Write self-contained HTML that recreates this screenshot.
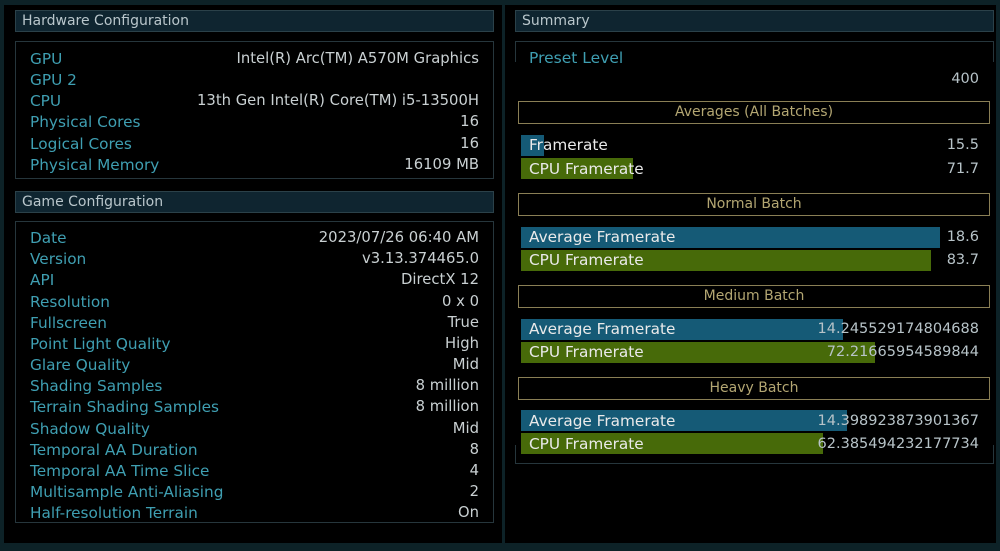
<!DOCTYPE html><html><head><meta charset="utf-8"><style>
*{margin:0;padding:0;box-sizing:border-box}
body{width:1000px;height:551px;background:#0d2227;position:relative;overflow:hidden;font-family:"DejaVu Sans","Liberation Sans",sans-serif;font-size:14.5px}
.a{position:absolute}
.blk{background:#000}
.hdr{position:absolute;background:#0f2530;border:1px solid #2b4149;color:#b9c6cb;padding-left:6px;line-height:21px;font-size:14px}
.box{position:absolute;border:1px solid #26363c}
.w{position:absolute;left:0;width:1000px;height:10px}
.l{position:absolute;left:30px;color:#3f9fb2;white-space:nowrap;font-size:15.3px}
.v{position:absolute;right:521px;color:#c9d0d2;white-space:nowrap;text-align:right;font-size:14.8px}
.gold{position:absolute;left:518px;width:472px;height:23px;border:1px solid #8a7f55;color:#b3a672;text-align:center;line-height:21px;font-size:14px}
.bar{position:absolute;left:521px;height:21px}
.bl{background:#155a76}.gr{background:#476a09}
.bt{position:absolute;left:529px;color:#eaeaea;white-space:nowrap;font-size:15.3px}
.bv{position:absolute;right:21px;color:#b7c3c8;white-space:nowrap}
</style></head><body>
<div class="a blk" style="left:4px;top:0;width:498px;height:543px"></div>
<div class="a blk" style="left:505px;top:0;width:491px;height:543px"></div>
<div class="a" style="left:0;top:0;width:1000px;height:5px;background:#0d2227"></div>

<div class="hdr" style="left:15px;top:10px;width:479px;height:22px">Hardware Configuration</div>
<div class="box" style="left:15px;top:41px;width:479px;height:138px"></div>
<div class="hdr" style="left:15px;top:191px;width:479px;height:22px">Game Configuration</div>
<div class="box" style="left:15px;top:221px;width:479px;height:302px"></div>

<div class="w" style="top:1px">
<div class="l" style="top:49px">GPU</div><div class="v" style="top:49px">Intel(R) Arc(TM) A570M Graphics</div>
<div class="l" style="top:70px">GPU 2</div>
<div class="l" style="top:91px">CPU</div><div class="v" style="top:91px">13th Gen Intel(R) Core(TM) i5-13500H</div>
<div class="l" style="top:112px">Physical Cores</div><div class="v" style="top:112px">16</div>
<div class="l" style="top:134px">Logical Cores</div><div class="v" style="top:134px">16</div>
<div class="l" style="top:155px">Physical Memory</div><div class="v" style="top:155px">16109 MB</div>
</div>
<div class="w" style="top:229px">
<div class="l" style="top:0px">Date</div><div class="v" style="top:0px">2023/07/26 06:40 AM</div>
<div class="l" style="top:21px">Version</div><div class="v" style="top:21px">v3.13.374465.0</div>
<div class="l" style="top:42px">API</div><div class="v" style="top:42px">DirectX 12</div>
<div class="l" style="top:64px">Resolution</div><div class="v" style="top:64px">0 x 0</div>
<div class="l" style="top:85px">Fullscreen</div><div class="v" style="top:85px">True</div>
<div class="l" style="top:106px">Point Light Quality</div><div class="v" style="top:106px">High</div>
<div class="l" style="top:127px">Glare Quality</div><div class="v" style="top:127px">Mid</div>
<div class="l" style="top:148px">Shading Samples</div><div class="v" style="top:148px">8 million</div>
<div class="l" style="top:169px">Terrain Shading Samples</div><div class="v" style="top:169px">8 million</div>
<div class="l" style="top:191px">Shadow Quality</div><div class="v" style="top:191px">Mid</div>
<div class="l" style="top:212px">Temporal AA Duration</div><div class="v" style="top:212px">8</div>
<div class="l" style="top:233px">Temporal AA Time Slice</div><div class="v" style="top:233px">4</div>
<div class="l" style="top:254px">Multisample Anti-Aliasing</div><div class="v" style="top:254px">2</div>
<div class="l" style="top:275px">Half-resolution Terrain</div><div class="v" style="top:275px">On</div>
</div>

<div class="hdr" style="left:515px;top:10px;width:479px;height:22px">Summary</div>
<div class="a" style="left:515px;top:41px;width:479px;height:21px;border:1px solid #26363c;border-bottom:none"></div>
<div class="a" style="left:515px;top:445px;width:479px;height:19px;border:1px solid #26363c;border-top:none"></div>
<div class="l" style="left:529px;top:49px;font-size:15.5px">Preset Level</div>
<div class="bv" style="top:71px">400</div>

<div class="gold" style="top:101px">Averages (All Batches)</div>
<div class="bar bl" style="top:135px;width:23px"></div>
<div class="bar gr" style="top:158px;width:112px"></div>
<div class="bt" style="top:136px">Framerate</div><div class="bv" style="top:137px">15.5</div>
<div class="bt" style="top:160px">CPU Framerate</div><div class="bv" style="top:161px">71.7</div>

<div class="gold" style="top:193px">Normal Batch</div>
<div class="bar bl" style="top:227px;width:419px"></div>
<div class="bar gr" style="top:250px;width:410px"></div>
<div class="bt" style="top:228px">Average Framerate</div><div class="bv" style="top:229px">18.6</div>
<div class="bt" style="top:251px">CPU Framerate</div><div class="bv" style="top:252px">83.7</div>

<div class="gold" style="top:285px">Medium Batch</div>
<div class="bar bl" style="top:319px;width:322px"></div>
<div class="bar gr" style="top:342px;width:354px"></div>
<div class="bt" style="top:320px">Average Framerate</div><div class="bv" style="top:321px">14.245529174804688</div>
<div class="bt" style="top:343px">CPU Framerate</div><div class="bv" style="top:344px">72.21665954589844</div>

<div class="gold" style="top:377px">Heavy Batch</div>
<div class="bar bl" style="top:410px;width:326px"></div>
<div class="bar gr" style="top:433px;width:302px"></div>
<div class="bt" style="top:412px">Average Framerate</div><div class="bv" style="top:413px">14.398923873901367</div>
<div class="bt" style="top:435px">CPU Framerate</div><div class="bv" style="top:436px">62.385494232177734</div>
</body></html>
